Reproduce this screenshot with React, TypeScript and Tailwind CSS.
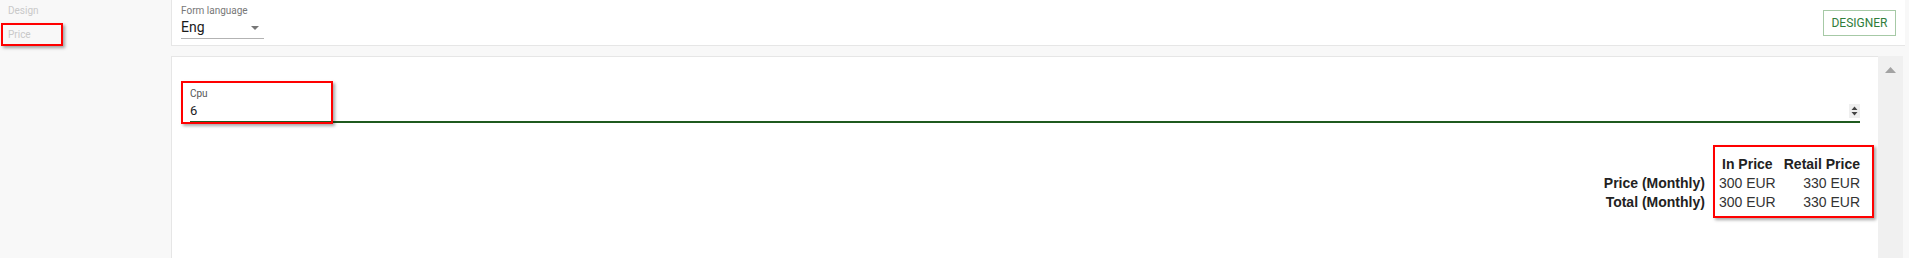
import React from "react";

const roboto = { fontFamily: "Roboto, 'Liberation Sans', sans-serif" };

// red annotation frame laid over existing content
function Mark({ className }: { className: string }) {
  return (
    <span
      className={`pointer-events-none absolute border-2 border-[#ff0000] shadow-[2px_2px_3px_rgba(0,0,0,0.35)] ${className}`}
    />
  );
}

const rows = [
  { label: "Price (Monthly)", inPrice: "300 EUR", retail: "330 EUR" },
  { label: "Total (Monthly)", inPrice: "300 EUR", retail: "330 EUR" },
];

export default function App() {
  return (
    <div
      className="flex h-[258px] w-[1909px] overflow-hidden bg-[#f8f8f8]"
      style={roboto}
    >
      {/* Sidebar */}
      <aside className="flex w-[171px] shrink-0 flex-col gap-[10px] pl-[8px] pt-[4px] text-[10px] leading-[14px] text-[#c9c9c9]">
        <div>Design</div>
        <div className="relative">
          Price
          <Mark className="-left-[7px] -top-[5px] h-[23px] w-[62px]" />
        </div>
      </aside>

      <div className="flex h-[258px] w-[1735px] shrink-0 flex-col">
        {/* Top bar */}
        <header className="flex h-[46px] w-[1734px] shrink-0 items-center justify-between border-b border-l border-[#e6e6e6] bg-white pl-[9px]">
          <div className="self-start pt-[5px]">
            <div className="text-[10px] leading-[12px] text-[#777]">Form language</div>
            <div className="flex h-[22px] w-[83px] items-center justify-between border-b border-[#b3b3b3] pr-[5px]">
              <span className="text-[14px] text-[#1a1a1a]">Eng</span>
              <svg width="8" height="4" viewBox="0 0 8 4">
                <path d="M0 0h8L4 4z" fill="#777" />
              </svg>
            </div>
          </div>
          <button className="mr-[9px] h-[26px] w-[73px] border border-[#a6c9a6] text-[12px] uppercase text-[#2f7d3a]">
            Designer
          </button>
        </header>

        {/* Content card with scrollbar */}
        <div className="mt-[10px] flex min-h-0 flex-1 pr-[3px]">
          <main className="flex-1 overflow-hidden border-l border-t border-[#e6e6e6] bg-white px-[18px] pt-[31px]">
            <div className="relative">
              <div className="text-[10px] leading-[12px] text-[#555]">Cpu</div>
              <div className="flex h-[21px] items-center justify-between">
                <span className="text-[13px] text-[#222]">6</span>
                <span className="flex h-[14px] w-[11px] items-center justify-center bg-[#efefef]">
                  <svg width="7" height="10" viewBox="0 0 7 10">
                    <path d="M0.5 4L3.5 0.5 6.5 4z M0.5 6L3.5 9.5 6.5 6z" fill="#444" />
                  </svg>
                </span>
              </div>
              <div className="h-[2px] bg-[#1f5a1f]" />
              <Mark className="-left-[9px] -top-[7px] h-[43px] w-[152px]" />
            </div>

            <div
              className="mt-[31px] flex justify-end text-[14px] text-[#333]"
              style={{ fontFamily: "'Liberation Sans', Arial, sans-serif" }}
            >
              <div className="relative grid grid-cols-[auto_auto_auto] whitespace-nowrap">
                <div className="leading-[20px]" />
                <div className="pl-[14px] text-center font-bold leading-[20px] text-[#222]">In Price</div>
                <div className="pl-[8px] text-center font-bold leading-[20px] text-[#222]">Retail Price</div>
                {rows.map((r) => (
                  <React.Fragment key={r.label}>
                    <div className="text-right font-bold leading-[19px] text-[#222]">{r.label}</div>
                    <div className="pl-[14px] leading-[19px]">{r.inPrice}</div>
                    <div className="text-right leading-[19px]">{r.retail}</div>
                  </React.Fragment>
                ))}
                <Mark className="-right-[14px] -top-[9px] h-[73px] w-[161px]" />
              </div>
            </div>
          </main>
          <div className="flex w-[25px] justify-center bg-[#f0f0f0] pt-[11px]">
            <svg width="11" height="6" viewBox="0 0 11 6">
              <path d="M0 6L5.5 0 11 6z" fill="#a3a3a3" />
            </svg>
          </div>
        </div>
      </div>
    </div>
  );
}
